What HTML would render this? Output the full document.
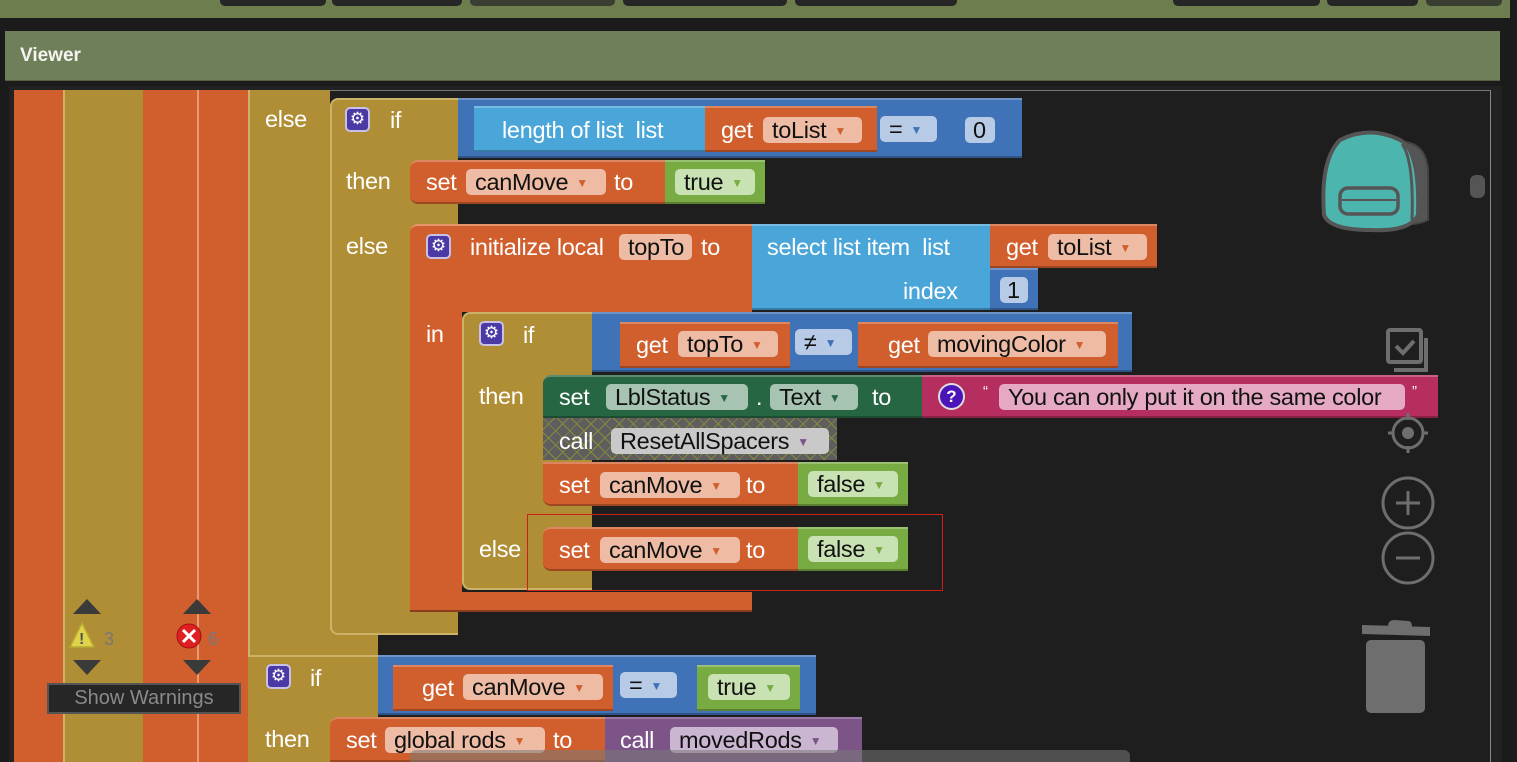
<!DOCTYPE html>
<html><head><meta charset="utf-8"><style>
*{margin:0;padding:0;box-sizing:border-box}
body{width:1517px;height:762px;overflow:hidden;background:#1b1b1b;position:relative;font-family:"Liberation Sans",sans-serif}
.a{position:absolute}
.o{background:#d15f2e}
.y{background:#b08e36}
.bl{background:#3f72b6}
.lb{background:#4aa5d8}
.g{background:#78ac42}
.dg{background:#266642}
.mg{background:#b62d5f}
.pu{background:#7c5487}
.t{position:absolute;color:#fff;font-size:23.5px;line-height:24px;white-space:nowrap;letter-spacing:-0.3px}
.p{position:absolute;border-radius:5px;color:#111;font-size:23.5px;line-height:26px;height:26px;padding-left:9px;white-space:nowrap;overflow:hidden;letter-spacing:-0.3px}
.po{background:#eebca4}.pg{background:#c9e2b3}.pb{background:#b8cbe6}.pd{background:#a7c4b3}.pgr{background:#c9c9c9}.pp{background:#cbb6d1}.pm{background:#e6a9c4}
.ar{font-size:12px;margin-left:8px;vertical-align:3px}
.po .ar{color:#d15f2e}.pg .ar{color:#78ac42}.pb .ar{color:#3f72b6}.pd .ar{color:#266642}.pgr .ar,.pp .ar{color:#7c5487}
.gear{position:absolute;width:25px;height:25px;background:#4b3aa6;border:2px solid #c9c0e6;border-radius:5px;color:#fff;font-size:17px;line-height:20px;text-align:center}
.bd{border-top:2px solid rgba(255,255,255,.25);border-bottom:2px solid rgba(0,0,0,.25)}
</style></head><body>
<div class="a" style="left:0;top:0;width:1510px;height:18px;background:#6e7d4e"></div>
<div class="a" style="left:220px;top:0;width:106px;height:6px;background:#262626;border-radius:0 0 5px 5px"></div>
<div class="a" style="left:332px;top:0;width:130px;height:6px;background:#262626;border-radius:0 0 5px 5px"></div>
<div class="a" style="left:470px;top:0;width:145px;height:6px;background:#3a3d32;border-radius:0 0 5px 5px"></div>
<div class="a" style="left:623px;top:0;width:164px;height:6px;background:#262626;border-radius:0 0 5px 5px"></div>
<div class="a" style="left:795px;top:0;width:162px;height:6px;background:#262626;border-radius:0 0 5px 5px"></div>
<div class="a" style="left:1173px;top:0;width:147px;height:6px;background:#262626;border-radius:0 0 5px 5px"></div>
<div class="a" style="left:1327px;top:0;width:91px;height:6px;background:#262626;border-radius:0 0 5px 5px"></div>
<div class="a" style="left:1426px;top:0;width:76px;height:6px;background:#3a3d32;border-radius:0 0 5px 5px"></div>
<div class="a" style="left:5px;top:31px;width:1495px;height:50px;background:#6f7f5a;border-bottom:1px solid #55603f"></div>
<div class="t" style="left:20px;top:44px;font-weight:bold;font-size:19px;color:#f4f4f0;letter-spacing:0">Viewer</div>
<div class="a" style="left:9px;top:86px;width:1493px;height:676px;background:#222"></div>
<div class="a" style="left:14px;top:90px;width:1477px;height:672px;background:#1e1e1e;border-right:1px solid #888;border-top:1px solid #777"></div>

<div class="a o" style="left:14px;top:90px;width:49px;height:672px"></div>
<div class="a y" style="left:63px;top:90px;width:80px;height:672px;border-left:2px solid #cdb36a"></div>
<div class="a o" style="left:143px;top:90px;width:54px;height:672px"></div>
<div class="a o" style="left:197px;top:90px;width:51px;height:672px;border-left:2px solid #e59a72"></div>
<div class="a y" style="left:248px;top:90px;width:82px;height:672px;border-left:2px solid #cdb36a"></div>
<div class="a y" style="left:330px;top:598px;width:48px;height:164px"></div>
<div class="t" style="left:265px;top:107px">else</div>

<div class="a y" style="left:330px;top:98px;width:128px;height:537px;border:2px solid #cdb36a;border-right:none;border-radius:8px 0 0 8px"></div>
<div class="gear" style="left:345px;top:107px">⚙</div>
<div class="t" style="left:390px;top:108px">if</div>
<div class="a bl bd" style="left:458px;top:98px;width:564px;height:60px"></div>
<div class="a lb bd" style="left:474px;top:106px;width:232px;height:46px"></div>
<div class="t" style="left:502px;top:118px">length of list &nbsp;list</div>
<div class="a o bd" style="left:705px;top:106px;width:172px;height:46px"></div>
<div class="t" style="left:721px;top:118px">get</div>
<div class="p po" style="left:763px;top:117px;width:99px">toList<span class="ar">▼</span></div>
<div class="p pb" style="left:880px;top:116px;width:57px">=<span class="ar">▼</span></div>
<div class="p pb" style="left:965px;top:117px;width:30px;padding-left:8px">0</div>
<div class="t" style="left:346px;top:169px">then</div>
<div class="a o bd" style="left:410px;top:160px;width:256px;height:44px;border-radius:8px 0 0 8px"></div>
<div class="t" style="left:426px;top:170px">set</div>
<div class="p po" style="left:466px;top:169px;width:140px">canMove<span class="ar">▼</span></div>
<div class="t" style="left:614px;top:170px">to</div>
<div class="a g bd" style="left:665px;top:160px;width:100px;height:44px"></div>
<div class="p pg" style="left:675px;top:169px;width:80px">true<span class="ar">▼</span></div>
<div class="t" style="left:346px;top:234px">else</div>

<div class="a o" style="left:410px;top:224px;width:342px;height:88px;border-radius:8px 0 0 0;border-top:2px solid #e8946c"></div>
<div class="a o" style="left:410px;top:310px;width:52px;height:302px;border-radius:0 0 0 8px"></div>
<div class="a o" style="left:410px;top:592px;width:342px;height:20px;border-bottom:2px solid #8a3e1e"></div>
<div class="gear" style="left:426px;top:234px">⚙</div>
<div class="t" style="left:470px;top:235px">initialize local</div>
<div class="p po" style="left:619px;top:234px;width:73px">topTo</div>
<div class="t" style="left:701px;top:235px">to</div>
<div class="a lb bd" style="left:752px;top:224px;width:240px;height:86px"></div>
<div class="t" style="left:767px;top:235px">select list item &nbsp;list</div>
<div class="t" style="left:903px;top:279px">index</div>
<div class="a o bd" style="left:990px;top:224px;width:167px;height:44px"></div>
<div class="t" style="left:1006px;top:235px">get</div>
<div class="p po" style="left:1048px;top:234px;width:99px">toList<span class="ar">▼</span></div>
<div class="a bl bd" style="left:990px;top:268px;width:48px;height:42px"></div>
<div class="p pb" style="left:1000px;top:277px;width:28px;padding-left:7px">1</div>
<div class="t" style="left:426px;top:322px">in</div>

<div class="a y" style="left:462px;top:312px;width:130px;height:278px;border:2px solid #cdb36a;border-right:none;border-radius:8px 0 0 8px"></div>
<div class="gear" style="left:479px;top:321px">⚙</div>
<div class="t" style="left:523px;top:323px">if</div>
<div class="a bl bd" style="left:592px;top:312px;width:540px;height:60px"></div>
<div class="a o bd" style="left:620px;top:322px;width:170px;height:46px"></div>
<div class="t" style="left:636px;top:333px">get</div>
<div class="p po" style="left:678px;top:331px;width:100px">topTo<span class="ar">▼</span></div>
<div class="p pb" style="left:795px;top:329px;width:57px">≠<span class="ar">▼</span></div>
<div class="a o bd" style="left:858px;top:322px;width:260px;height:46px"></div>
<div class="t" style="left:888px;top:333px">get</div>
<div class="p po" style="left:928px;top:331px;width:178px">movingColor<span class="ar">▼</span></div>
<div class="t" style="left:479px;top:384px">then</div>
<div class="a dg bd" style="left:543px;top:375px;width:380px;height:43px;border-radius:8px 0 0 0"></div>
<div class="t" style="left:559px;top:385px">set</div>
<div class="p pd" style="left:606px;top:384px;width:142px">LblStatus<span class="ar">▼</span></div>
<div class="t" style="left:756px;top:385px">.</div>
<div class="p pd" style="left:770px;top:384px;width:88px">Text<span class="ar">▼</span></div>
<div class="t" style="left:872px;top:385px">to</div>
<div class="a mg bd" style="left:922px;top:375px;width:516px;height:43px"></div>
<div class="a" style="left:938px;top:383px;width:27px;height:27px;border-radius:50%;background:#4a14b8;border:2px solid #ddd;color:#fff;font-weight:bold;font-size:17px;line-height:23px;text-align:center">?</div>
<div class="t" style="left:983px;top:380px;font-size:15px">“</div>
<div class="p pm" style="left:999px;top:384px;width:406px">You can only put it on the same color</div>
<div class="t" style="left:1412px;top:380px;font-size:15px">”</div>
<div class="a" style="left:543px;top:418px;width:294px;height:42px;background-color:#5e5e5e;background-image:repeating-linear-gradient(45deg,transparent 0 9px,#8a8a3a 9px 10px),repeating-linear-gradient(-45deg,transparent 0 9px,#8a8a3a 9px 10px)"></div>
<div class="t" style="left:559px;top:429px">call</div>
<div class="p pgr" style="left:611px;top:428px;width:218px">ResetAllSpacers<span class="ar">▼</span></div>
<div class="a o bd" style="left:543px;top:462px;width:256px;height:44px;border-radius:0 0 0 8px"></div>
<div class="t" style="left:559px;top:473px">set</div>
<div class="p po" style="left:600px;top:472px;width:140px">canMove<span class="ar">▼</span></div>
<div class="t" style="left:746px;top:473px">to</div>
<div class="a g bd" style="left:798px;top:462px;width:110px;height:44px"></div>
<div class="p pg" style="left:808px;top:471px;width:90px">false<span class="ar">▼</span></div>
<div class="t" style="left:479px;top:537px">else</div>
<div class="a o bd" style="left:543px;top:527px;width:256px;height:44px;border-radius:8px 0 0 8px"></div>
<div class="t" style="left:559px;top:538px">set</div>
<div class="p po" style="left:600px;top:537px;width:140px">canMove<span class="ar">▼</span></div>
<div class="t" style="left:746px;top:538px">to</div>
<div class="a g bd" style="left:798px;top:527px;width:110px;height:44px"></div>
<div class="p pg" style="left:808px;top:536px;width:90px">false<span class="ar">▼</span></div>
<div class="a" style="left:527px;top:514px;width:416px;height:77px;border:1px solid #d0201a"></div>

<div class="a y" style="left:248px;top:655px;width:130px;height:107px;border-top:2px solid #cdb36a"></div>
<div class="gear" style="left:266px;top:664px">⚙</div>
<div class="t" style="left:310px;top:666px">if</div>
<div class="a bl bd" style="left:378px;top:655px;width:438px;height:60px"></div>
<div class="a o bd" style="left:393px;top:665px;width:220px;height:46px"></div>
<div class="t" style="left:422px;top:676px">get</div>
<div class="p po" style="left:463px;top:674px;width:140px">canMove<span class="ar">▼</span></div>
<div class="p pb" style="left:620px;top:672px;width:57px">=<span class="ar">▼</span></div>
<div class="a g bd" style="left:697px;top:665px;width:103px;height:46px"></div>
<div class="p pg" style="left:708px;top:674px;width:82px">true<span class="ar">▼</span></div>
<div class="t" style="left:265px;top:727px">then</div>
<div class="a o bd" style="left:330px;top:717px;width:276px;height:45px;border-radius:8px 0 0 0"></div>
<div class="t" style="left:346px;top:728px">set</div>
<div class="p po" style="left:385px;top:727px;width:160px">global rods<span class="ar">▼</span></div>
<div class="t" style="left:553px;top:728px">to</div>
<div class="a pu" style="left:605px;top:717px;width:257px;height:45px;border-top:2px solid #9a78a6"></div>
<div class="t" style="left:620px;top:728px">call</div>
<div class="p pp" style="left:670px;top:727px;width:168px">movedRods<span class="ar">▼</span></div>
<div class="a" style="left:410px;top:750px;width:720px;height:12px;background:rgba(120,120,120,.55);border-radius:6px 6px 0 0"></div>

<svg class="a" style="left:60px;top:595px" width="200" height="85">
<polygon points="13,19 27,4 41,19" fill="#3a3a3a"/>
<polygon points="13,65 41,65 27,80" fill="#3a3a3a"/>
<polygon points="123,19 137,4 151,19" fill="#3a3a3a"/>
<polygon points="123,65 151,65 137,80" fill="#3a3a3a"/>
<polygon points="22,28 10,52 34,52" fill="#e0d24a" stroke="#b5a930" stroke-width="1.5"/>
<text x="19" y="49" font-size="16" font-weight="bold" fill="#555" font-family="Liberation Sans">!</text>
<text x="44" y="50" font-size="18" fill="#777" font-family="Liberation Sans">3</text>
<circle cx="129" cy="41" r="12" fill="#e02020" stroke="#a01010"/>
<path d="M123 35 L135 47 M135 35 L123 47" stroke="#fff" stroke-width="3"/>
<text x="148" y="50" font-size="18" fill="#777" font-family="Liberation Sans">6</text>
</svg>
<div class="a" style="left:47px;top:683px;width:194px;height:31px;background:#262626;border:2px solid #555;color:#8a8a8a;font-size:20px;line-height:27px;text-align:center">Show Warnings</div>

<svg class="a" style="left:1310px;top:120px" width="180" height="600">
<rect x="160" y="55" width="15" height="23" rx="6" fill="#555"/>
<path d="M88 22 Q115 20 118 50 L118 100 Q110 104 100 104 Z" fill="#555" stroke="#444" stroke-width="2"/>
<path d="M30 20 Q60 5 90 20 Q110 30 108 95 Q100 112 60 110 Q20 110 14 95 Q10 40 30 20 Z" fill="#4cb6ae" stroke="#555" stroke-width="4"/>
<path d="M92 24 Q104 40 102 100" stroke="#555" stroke-width="3" fill="none"/>
<rect x="30" y="68" width="58" height="26" rx="8" fill="none" stroke="#555" stroke-width="3.5"/>
<path d="M32 80 L86 80" stroke="#555" stroke-width="2"/>
<rect x="78" y="210" width="33" height="32" rx="2" fill="none" stroke="#6e6e6e" stroke-width="4"/>
<path d="M86 226 L93 233 L104 221" stroke="#6e6e6e" stroke-width="4" fill="none"/>
<path d="M116 218 L116 250 L84 250" stroke="#6e6e6e" stroke-width="4" fill="none"/>
<circle cx="98" cy="313" r="15" fill="none" stroke="#6e6e6e" stroke-width="3"/>
<circle cx="98" cy="313" r="6" fill="#6e6e6e"/>
<path d="M98 293 V300 M98 326 V333 M78 313 H84 M112 313 H118" stroke="#6e6e6e" stroke-width="3"/>
<circle cx="98" cy="383" r="25" fill="none" stroke="#6e6e6e" stroke-width="3"/>
<path d="M86 383 H110 M98 371 V395" stroke="#6e6e6e" stroke-width="3"/>
<circle cx="98" cy="438" r="25" fill="none" stroke="#6e6e6e" stroke-width="3"/>
<path d="M86 438 H110" stroke="#6e6e6e" stroke-width="3"/>
<path d="M52 505 L120 507 L120 516 L52 514 Z" fill="#6e6e6e"/>
<path d="M78 506 Q78 500 85 500 L98 501 Q102 501 102 507" fill="#6e6e6e"/>
<rect x="56" y="520" width="59" height="73" rx="5" fill="#6e6e6e"/>
</svg>
</body></html>
